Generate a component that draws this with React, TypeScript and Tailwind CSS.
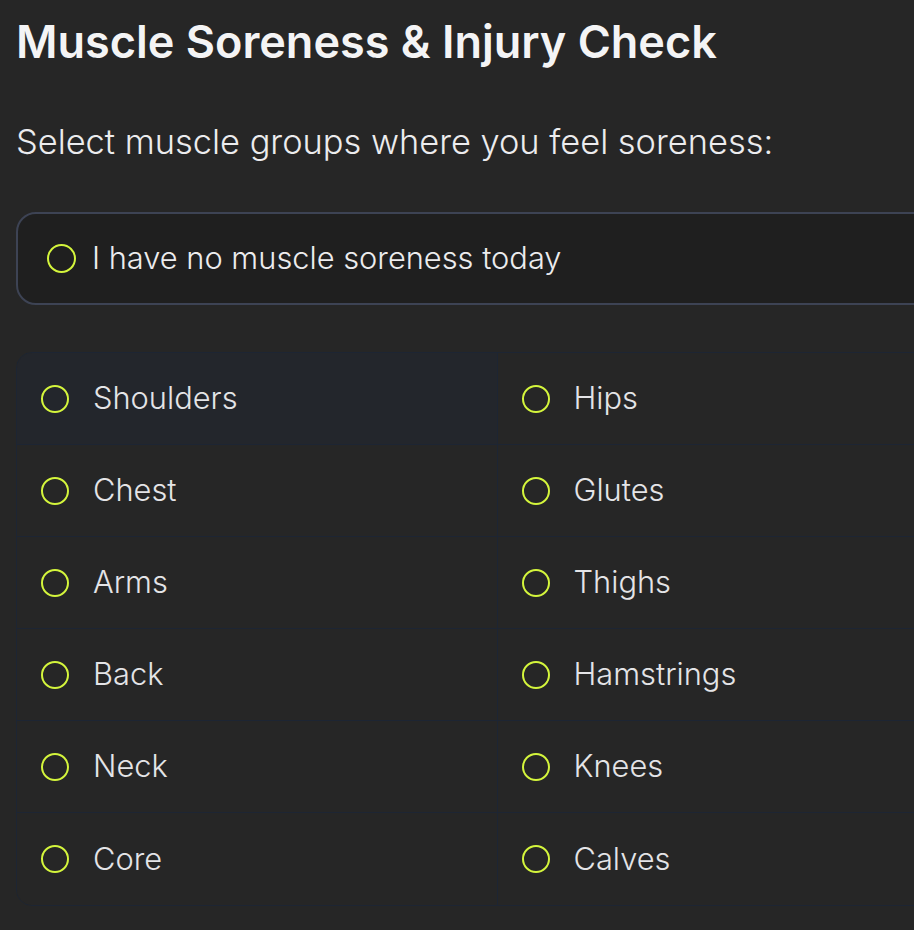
const LEFT = ['Shoulders', 'Chest', 'Arms', 'Back', 'Neck', 'Core'];
const RIGHT = ['Hips', 'Glutes', 'Thighs', 'Hamstrings', 'Knees', 'Calves'];

function Circle() {
  return <span className="h-[28px] w-[28px] shrink-0 rounded-full border-2 border-[#d4f53c]" />;
}

export default function App() {
  const rows = LEFT.map((l, i) => [l, RIGHT[i]]);
  return (
    <div
      className="min-h-screen w-full overflow-hidden bg-[#262626] pl-4 pb-6"
      style={{ fontFamily: 'Inter, "DejaVu Sans", sans-serif' }}
    >
      <div className="w-[963px]">
        <h1 className="pt-[19px] text-[45px] leading-[45px] font-semibold text-[#f4f4f5]">
          Muscle Soreness &amp; Injury Check
        </h1>
        <p className="mt-[61px] text-[34.4px] leading-[34px] font-light text-[#ececee]">
          Select muscle groups where you feel soreness:
        </p>
        <div className="mt-[53px] flex h-[93px] items-center gap-4 rounded-[20px] border-2 border-[#3d4354] bg-[#1f1f1f] pl-[29px]">
          <span className="h-[29px] w-[29px] shrink-0 rounded-full border-2 border-[#d4f53c]" />
          <span className="text-[30.8px] leading-none font-light text-[#ececee]">I have no muscle soreness today</span>
        </div>
        <div className="mt-[47px] grid grid-cols-2 overflow-hidden rounded-[16px] border border-[#1d2533]">
          {rows.map(([l, r], i) => (
            <div key={l} className="contents">
              <div
                className={`flex h-[92px] items-center gap-6 border-r border-[#1d2533] pl-6 ${
                  i < 5 ? 'border-b' : ''
                } ${i === 0 ? 'bg-[#23262c]' : 'bg-[#262626]'}`}
              >
                <Circle />
                <span className="text-[30.8px] leading-none font-light text-[#e4e4e7]">{l}</span>
              </div>
              <div
                className={`flex h-[92px] items-center gap-6 border-[#1d2533] pl-6 ${i < 5 ? 'border-b' : ''}`}
              >
                <Circle />
                <span className="text-[30.8px] leading-none font-light text-[#e4e4e7]">{r}</span>
              </div>
            </div>
          ))}
        </div>
      </div>
    </div>
  );
}
